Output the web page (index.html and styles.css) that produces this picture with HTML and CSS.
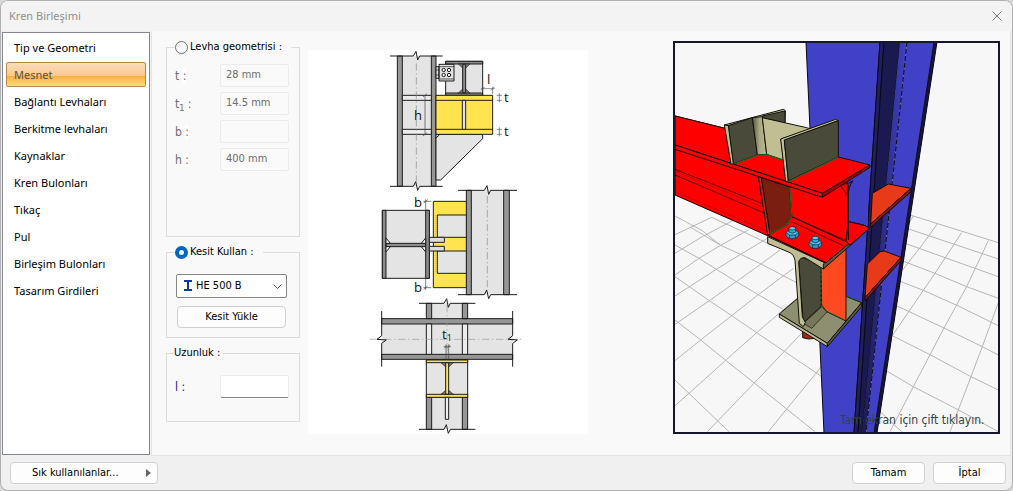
FILE: index.html
```html
<!DOCTYPE html>
<html lang="tr">
<head>
<meta charset="utf-8">
<title>Kren Birleşimi</title>
<link rel="stylesheet" href="styles.css">
</head>
<body>
<main class="window">
  <header class="titlebar">
    <h1 class="title">Kren Birleşimi</h1>
    <button class="close" type="button" aria-label="Kapat"><svg width="10" height="10" viewBox="0 0 10 10"><path d="M0.5 0.5 9.5 9.5M9.5 0.5 0.5 9.5" stroke="#777" fill="none"/></svg></button>
  </header>
  <div class="content">
    <nav class="sidebar">
      <button class="item" type="button">Tip ve Geometri</button>
      <button class="item selected" type="button" aria-current="page">Mesnet</button>
      <button class="item" type="button">Bağlantı Levhaları</button>
      <button class="item" type="button">Berkitme levhaları</button>
      <button class="item" type="button">Kaynaklar</button>
      <button class="item" type="button">Kren Bulonları</button>
      <button class="item" type="button">Tıkaç</button>
      <button class="item" type="button">Pul</button>
      <button class="item" type="button">Birleşim Bulonları</button>
      <button class="item" type="button">Tasarım Girdileri</button>
    </nav>
    <section class="panel">
      <form class="settings">
        <fieldset class="group group-plate">
          <legend class="legend wide"><label class="choice"><input class="radio" type="radio" name="source">Levha geometrisi :</label></legend>
          <div class="row"><label class="name" for="t">t <span class="colon">:</span></label><input class="field" id="t" value="28 mm" disabled></div>
          <div class="row"><label class="name" for="t1">t<sub>1</sub> <span class="colon">:</span></label><input class="field" id="t1" value="14.5 mm" disabled></div>
          <div class="row"><label class="name" for="b">b <span class="colon">:</span></label><input class="field" id="b" disabled></div>
          <div class="row"><label class="name" for="h">h <span class="colon">:</span></label><input class="field" id="h" value="400 mm" disabled></div>
        </fieldset>
        <fieldset class="group group-section">
          <legend class="legend wide"><label class="choice"><input class="radio" type="radio" name="source" checked>Kesit Kullan :</label></legend>
          <div class="combo">
            <select class="select" aria-label="Kesit"><option>HE 500 B</option></select>
            <svg class="profile" width="8" height="11" viewBox="0 0 8 11"><path d="M0 1H8M0 10H8M4 1V10" stroke="#0a3a9c" stroke-width="2" fill="none"/></svg>
            <svg class="chevron" width="9" height="5" viewBox="0 0 9 5"><path d="M0.5 0.5 4.5 4.5 8.5 0.5" stroke="#555" fill="none"/></svg>
          </div>
          <button class="button load" type="button">Kesit Yükle</button>
        </fieldset>
        <fieldset class="group group-length">
          <legend class="legend">Uzunluk :</legend>
          <div class="row"><label class="name active" for="l">l :</label><input class="field editable" id="l"></div>
        </fieldset>
      </form>

      <svg class="diagram" viewBox="308 50 280 384" role="img" aria-label="Mesnet detayı">
        <g transform="translate(370 40) scale(.33333)" stroke="#1c1c1c" stroke-width="3" fill="none">
          <path d="M82 48H198V439H82z" fill="#e4e4e4" stroke="none"/>
          <path d="M82 48H97V439H82zM184 48H198V439H184z" fill="#969696"/>
          <path d="M97 166H184V181H97zM97 268H184V283H97z" fill="#ececec"/>
          <path d="M139 70V425" stroke="#888" stroke-width="2" stroke-dasharray="22 8 4 8"/>
          <path d="M60 48H130L138 34 143 60 149 48H218M60 439H130L137 425 143 451 149 439H218"/>
          <path d="M165 166V283M159 171 171 161M159 288 171 278" stroke="#444" stroke-width="2"/>
          <path d="M198 283H338V296L212 420H198z" fill="#e4e4e4"/><path d="M198 294 209 284"/>
          <path d="M227 64H338V166H227z" fill="#e4e4e4"/>
          <path d="M227 64H338V72H227zM227 159H338V166H227zM278 72H287V159H278z" fill="#8c8c8c"/>
          <path d="M265 72 278 84V72zM300 72 287 84V72zM265 159 278 147V159zM300 159 287 147V159z" fill="#777" stroke-width="2"/>
          <path d="M198 80H207V115H198zM207 73H252V123H207z" fill="#e0e0e0"/>
          <path d="M198 90H207M198 105H207M207 80H252M207 117H252" stroke-width="2"/>
          <g fill="#fff"><circle cx="221" cy="90" r="5"/><circle cx="237" cy="90" r="5"/><circle cx="221" cy="105" r="5"/><circle cx="237" cy="105" r="5"/></g>
          <path d="M198 166H368V283H198z" fill="#ffe450"/><path d="M198 181H368M198 268H368"/>
          <path d="M277 181H287V268H277z" fill="#e4e4e4"/>
          <path d="M333 146H374M338 140V157M368 140V162M333 151 343 141M363 151 373 141M388 160V187M388 262V289M380 166H396M380 181H396M380 268H396M380 283H396" stroke="#555" stroke-width="2"/>
        </g>
        <g transform="translate(370 180) scale(.33333)" stroke="#1c1c1c" stroke-width="3" fill="none">
          <path d="M289 31H418V344H289z" fill="#e4e4e4" stroke="none"/>
          <path d="M289 31H304V344H289zM401 31H418V344H401z" fill="#969696"/>
          <path d="M352 48V330" stroke="#888" stroke-width="2" stroke-dasharray="22 8 4 8"/>
          <path d="M264 31H343L351 17 356 43 362 31H441M264 344H343L350 330 356 356 362 344H441"/>
          <path d="M190 64H289V323H190z" fill="#ffe450"/>
          <path d="M202 105H289V172H202zM202 213H289V280H202z" fill="#e4e4e4"/>
          <path d="M203 172H224V213H203z" fill="#ffe450" stroke="none"/>
          <path d="M196 105V280" stroke="#7b6b18" stroke-width="1" stroke-dasharray="3 3"/>
          <path d="M37 91H178V295H37z" fill="#e4e4e4"/>
          <path d="M37 91H48V295H37zM167 91H178V295H167zM48 190H167V200H48z" fill="#8c8c8c"/>
          <path d="M48 174 61 190H48zM167 174 154 190H167zM48 216 61 200H48zM167 216 154 200H167z" fill="#fff"/>
          <path d="M178 172H223V187H178zM178 199H223V213H178z" fill="#ddd"/>
          <path d="M167 58V91M167 295V330M160 64H184M160 323H184M161 69 173 59M161 328 173 318" stroke="#444" stroke-width="2"/>
        </g>
        <g transform="translate(365 295) scale(.33333)" stroke="#1c1c1c" stroke-width="3" fill="none">
          <path d="M184 25H308V403H184zM50 71H443V193H50z" fill="#e4e4e4" stroke="none"/>
          <path d="M184 25H200V71H184zM292 25H308V71H292zM184 307H200V403H184zM292 307H308V403H292zM50 71H443V87H50zM50 178H443V193H50z" fill="#969696"/>
          <path d="M184 87H200V178H184zM292 87H308V178H292z" fill="#ececec"/>
          <path d="M15 133H475M246 30V190" stroke="#999" stroke-width="2" stroke-dasharray="22 8 4 8"/>
          <path d="M162 25H237L245 11 250 37 256 25H331M162 403H237L244 389 250 415 256 403H331M50 48V122L36 133 64 135 50 145V215M443 48V122L429 133 457 135 443 145V215"/>
          <path d="M184 195H308V307H184z" fill="#e4e4e4"/>
          <path d="M184 195H308V203H184zM184 298H308V307H184zM242 203H251V298H242z" fill="#ffe450"/>
          <path d="M228 203 242 216V203zM265 203 251 216V203zM228 298 242 286V298zM265 298 251 286V298z" fill="#777" stroke-width="2"/>
          <path d="M241 307H251V373H241z" fill="#eee"/>
          <path d="M236 155H258M243 148V193M251 148V193M238 160 247 150M246 160 255 150" stroke="#444" stroke-width="2"/>
        </g>
        <g class="dimension"><text x="414" y="120">h</text><text x="487" y="84">l</text><text x="504" y="102">t</text><text x="504" y="136">t</text><text x="414" y="207">b</text><text x="414" y="292">b</text><text x="442" y="339">t<tspan class="index" dy="2">1</tspan></text></g>
      </svg>

      <svg class="viewer" viewBox="673 41 327 393" role="img" aria-label="3B görünüm">
        <defs>
          <linearGradient id="tan"><stop stop-color="#55553f"/><stop offset=".5" stop-color="#aaa982"/><stop offset="1" stop-color="#b9b88f"/></linearGradient>
          <linearGradient id="navy"><stop stop-color="#1b1a50"/><stop offset="1" stop-color="#4141c8"/></linearGradient>
          <g id="bolt" stroke="#07202b" stroke-width="2"><path d="M-19 0-11-7H11L19 0V10L9 19H-9L-19 11z" fill="#2f9cc9"/><path d="M-19 0-8 8H9L19 0" fill="#5cc4ee"/><path d="M-8 8V19M9 8V19" fill="none"/><path d="M-10-12V-1Q0 6 10-1V-12z" fill="#35aede"/><ellipse cy="-12" rx="10" ry="5" fill="#62cdf5"/></g>
        </defs>
        <path d="M673 41H1000V434H673z" fill="#f7f7f7"/>
        <g transform="translate(670 230) scale(.33333)" stroke="#b3b7b3" stroke-width="3" fill="none">
          <path d="M15 450 57 490 143 573 177 605M15 270 92 330 167 391 253 459 350 537 435 605M15 140 118 212 185 257 260 308 343 364 455 440M15 45 87 85 139 118 199 155 265 194 380 262M15-42 97 2 152 46 212 73 273 102 380 158M62-8 152 46M125-38 230 10 310 48"/>
          <path d="M15 70 97 20 230-50M15 135 87 85 152 46 235 0M15 198 139 118 212 73 300 20M15 283 118 212 199 155 273 102 330 60M15 392 92 330 185 257 265 194 370 115M15 527 57 490 167 391 260 308 380 205M112 605 143 573 253 459 343 364 400 305M295 605 350 537 438 430 460 400M15 14 125-38"/>
        </g>
        <g transform="translate(830 230) scale(.33333)" stroke="#b3b7b3" stroke-width="3" fill="none">
          <path d="M240-45 505 38M230-5 505 87M225 40 505 140M218 93 315 130 410 170 505 205M208 153 280 181 385 228 505 287M195 225 342 294 457 350 505 375M187 317 300 374 423 440 505 480M165 420 250 470 380 537 505 605M145 540 215 605"/>
          <path d="M475 32 410 170 342 294 250 470 180 605M395 8 315 130 280 181 187 317M323-20 280 40 218 120M505 218 457 350 423 440 360 605M250-42 230-10"/>
        </g>
        <g stroke="#090913" stroke-width="1">
          <path d="M806 42H880L854 433H824z" fill="#4141c8"/>
          <path d="M880 42H884L858 433H854z" fill="#20205e"/>
          <path d="M884 42H900L862 433H858z" fill="#1b1a50"/>
          <path d="M900 42H907L866 433H862z" fill="url(#navy)" stroke="none"/>
          <path d="M907 42H934L874 433H866z" fill="#4141c8" stroke="none"/>
          <path d="M907 42 866 433" fill="none" stroke-dasharray="5 2"/>
          <path d="M934 42H937L877 433H874z" fill="#15153f"/>
        </g>
        <g transform="translate(830 35) scale(.33333)" stroke="#160808" stroke-width="3">
          <path d="M127 475 175 447 243 460 122 567z" fill="#e63a19"/><path d="M243 460V470L122 577V567z" fill="#851b10"/>
          <path d="M112 687 150 650 163 648 213 667 105 788z" fill="#e63a19"/><path d="M213 667V677L105 798V788z" fill="#851b10"/>
        </g>
        <g transform="translate(740 190) scale(.33333)" stroke="#12120d" stroke-width="3">
          <path d="M188 423 210 432 225 445 205 447 188 443z" fill="#a82713"/>
          <path d="M118 372 173 325 320 320 365 338 262 460z" fill="#8e8e70"/><path d="M118 372V382L262 470V460z" fill="#b7b58a"/><path d="M262 460V470L365 350V338z" fill="#5b5940"/>
          <path d="M190 400 245 350 262 365 215 415z" fill="#77775a" stroke-width="2"/>
          <path d="M175 200 243 220V350L190 398z" fill="#4a4a3a"/>
          <path d="M243 235 318 170V393L260 365 245 345z" fill="#ff4a20"/>
          <path d="M83 140V160L150 188Q162 193 165 210L178 400 190 410 196 398 187 380 176 215Q180 202 195 203L250 237 258 220z" fill="#c0bf94"/>
          <path d="M250 222V237L378 125V110z" fill="#5b5940"/>
        </g>
        <g transform="translate(670 35) scale(.33333)" stroke="#190000" stroke-width="3" fill="#f00">
          <path d="M15 243 165 280 505 366 535 452V560L588 583 468 683 295 603 15 480z"/>
          <path d="M535 560 585 570 588 583 468 683 293 600 365 545 528 620z"/>
          <path d="M15 403 275 505M15 420 280 533M365 545 525 615M365 560 520 632" fill="none" stroke-width="2"/>
          <path d="M15 470 295 590M15 408 275 515" fill="none" stroke="#b60000" stroke-width="2"/>
          <path d="M265 425 358 455 366 545 350 570 295 600z" fill="#7a1e10"/><path d="M265 425 274 428 300 598 293 600z" fill="#b92b18"/>
          <path d="M359 458 366 545 350 570 297 598" fill="none" stroke="#0c7c30"/>
          <path d="M15 330 15 243 165 280 505 366 600 390 457 475z"/>
          <path d="M15 330V343L457 487V475z"/><path d="M457 475V487L600 397V390z" fill="#a50000"/>
        </g>
        <path d="M850 188 868 171V226L849 220z" fill="#4141c8"/>
        <g transform="translate(670 35) scale(.33333)" stroke="#190000" stroke-width="3" fill="#f00">
          <path d="M535 560 588 573 598 580 540 630 528 620z"/>
          <path d="M535 445 548 438Q534 455 535 487V615" fill="none"/><path d="M512 452 532 445V480z" stroke-width="2"/>
        </g>
        <g transform="translate(670 35) scale(.33333)" stroke="#12120d" stroke-width="3">
          <path d="M163 270 340 223 346 227 345 262 277 248 175 272z" fill="#c0bf94"/>
          <path d="M277 243 345 228V265L277 248z" fill="#4a4a3a"/>
          <path d="M175 272 247 248 262 360 190 387z" fill="#4a4a3a"/><path d="M163 270 175 272 190 387 183 387z" fill="#c0bf94"/>
          <path d="M247 248 277 245 290 358 262 360z" fill="url(#tan)"/>
          <path d="M277 248 410 278 425 283 333 312 340 375 290 358z" fill="#c0bf94"/>
          <path d="M332 312 497 253 505 257 343 316 355 438 347 440z" fill="#c0bf94"/>
          <path d="M343 315 505 257V366L355 438z" fill="#4a4a3a"/>
          <path d="M190 388 262 361 290 359 338 375M355 440 505 367" fill="none" stroke="#087b36"/>
        </g>
        <g transform="translate(740 190) scale(.33333)">
          <use href="#bolt" x="157" y="127"/><use href="#bolt" x="226" y="156"/>
          <path d="M243 235V345L260 363 310 388M320 318 362 334" fill="none" stroke="#087b36" stroke-width="3" stroke-dasharray="9 5"/>
        </g>
        <path d="M674 42H999V433H674z" fill="none" stroke="#16162c" stroke-width="2"/>
        <text class="hint" x="840" y="424">Tam ekran için çift tıklayın.</text>
      </svg>
    </section>
  </div>
  <footer class="footer">
    <button class="button favorites" type="button"><span>Sık kullanılanlar...</span><svg width="5" height="8" viewBox="0 0 5 8"><path d="M0 0 5 4 0 8z" fill="#666"/></svg></button>
    <button class="button action" type="button">Tamam</button>
    <button class="button action" type="button">İptal</button>
  </footer>
</main>
</body>
</html>
```
FILE: styles.css
```css
* { box-sizing: border-box; }
body {
  margin: 0;
  background: #d8d8d8;
  color: #000;
  font: 11px/14px "Noto Sans", "Open Sans", sans-serif;
}
button, input, select { font: inherit; color: inherit; }
.window {
  display: flex;
  flex-direction: column;
  min-height: 100vh;
  border: 1px solid #b0b0b0;
  border-radius: 8px;
  background: #f0f0f0;
  overflow: hidden;
}
.titlebar {
  display: flex;
  align-items: center;
  justify-content: space-between;
  height: 30px;
  padding: 0 10px 0 8px;
  background: #f3f3f3;
}
.title { margin: 0; font-size: 11px; font-weight: 400; color: #8f8f8f; }
.close { display: flex; padding: 0; border: 0; background: none; }
.content { display: flex; flex: 1; gap: 1px; padding: 0 1px; }
.sidebar {
  display: flex;
  flex-direction: column;
  gap: 2px;
  width: 148px;
  margin: 1px 0;
  padding: 2px 3px;
  border: 1px solid #828790;
  background: #fff;
}
.item {
  height: 25px;
  padding: 0 7px;
  border: 1px solid transparent;
  border-radius: 2px;
  background: none;
  text-align: left;
}
.selected {
  border-color: #b58a4c;
  background: linear-gradient(#fbdcb9, #f9c98e 55%, #f8ad3c 56%, #fddc7c);
  color: #5c5040;
}
.panel {
  display: flex;
  align-items: flex-start;
  flex: 1;
  padding: 9px 10px 20px 14px;
  border: 1px solid #e5e5e5;
  border-top: 0;
  background: #f9f9f9;
}
.settings, .footer { font-family: "DejaVu Sans Condensed", "Noto Sans", sans-serif; }
.settings { display: flex; flex-direction: column; gap: 8px; width: 134px; }
.group { min-width: 0; margin: 0; padding: 0 10px 0 8px; border: 1px solid #dcdcdc; }
.group-plate { min-height: 197px; padding-top: 10px; }
.group-section { min-height: 93px; padding-top: 15px; }
.group-length { min-height: 76px; padding-top: 15px; }
.legend { height: 14px; padding: 0 3px 0 0; white-space: nowrap; }
.group-length .legend { margin-left: -1px; }
.wide { padding-right: 9px; }
.choice { display: flex; align-items: center; gap: 2px; }
.radio {
  appearance: none;
  flex: none;
  width: 13px;
  height: 13px;
  margin: 0;
  border: 1px solid #707070;
  border-radius: 50%;
  background: #fafafa;
}
.radio:checked { border: 4px solid #0067c0; background: #fff; }
.row { display: flex; align-items: center; justify-content: space-between; margin-bottom: 5px; }
.name { color: #6d6d6d; font-size: 12px; }
.name sub { font-size: 9px; line-height: 0; }
.colon { background: #fff; }
.active { color: #26266e; }
.field {
  width: 69px;
  height: 23px;
  padding: 0 5px 3px;
  border: 1px solid #ebebeb;
  border-radius: 2px;
  background: #fafafa;
  color: #6d6d6d;
}
.editable { border-bottom-color: #868686; background: #fff; color: #000; }
.combo { position: relative; width: 111px; margin-left: 1px; }
.select {
  display: block;
  appearance: none;
  width: 100%;
  height: 24px;
  padding: 0 20px 0 19px;
  border: 1px solid #868686;
  border-radius: 2px;
  background: #fff;
}
.profile { position: absolute; left: 8px; top: 6px; pointer-events: none; }
.chevron { position: absolute; right: 5px; top: 10px; pointer-events: none; }
.button {
  height: 22px;
  padding: 0;
  border: 1px solid #d0d0d0;
  border-radius: 4px;
  background: #fdfdfd;
  text-align: center;
}
.load { display: block; width: 109px; margin: 8px 0 0 2px; }
.diagram { display: block; width: 280px; margin: 10px 0 0 8px; background: #fff; }
.dimension { font: 13px "Open Sans", sans-serif; fill: #111; }
.index { font-size: 9px; }
.viewer { display: block; width: 327px; margin: 1px 0 0 auto; }
.hint { font: 12px "DejaVu Sans Condensed", "Noto Sans", sans-serif; fill: #2f4444; }
.footer { display: flex; align-items: center; gap: 8px; height: 34px; padding: 0 6px 0 9px; }
.favorites { display: flex; align-items: center; justify-content: space-between; width: 148px; margin-right: auto; padding: 0 6px 0 21px; }
.action { width: 73px; }
```
